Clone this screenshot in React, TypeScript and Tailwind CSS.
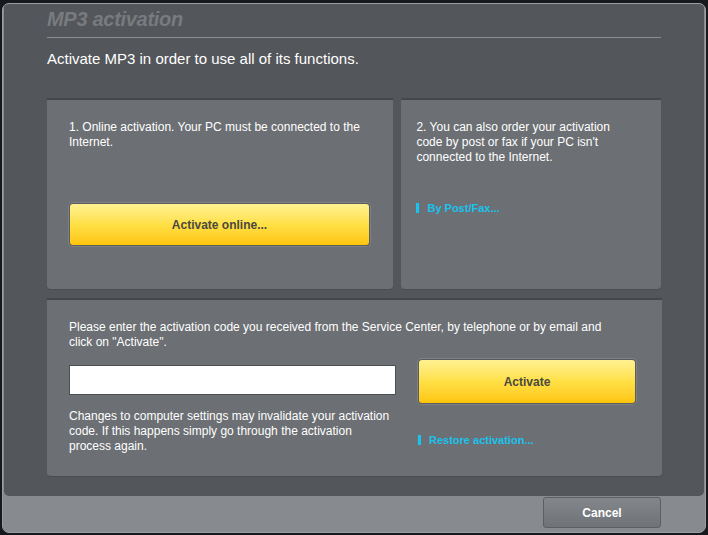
const font = { fontFamily: '"Liberation Sans", Arial, sans-serif' };

function YellowButton({ label, className }: { label: string; className: string }) {
  return (
    <div className={`rounded-[4px] p-px bg-[#5a5c5e] shadow-[0_0_0_1px_#7d8084] ${className}`}>
      <button className="w-full h-full rounded-[3px] bg-gradient-to-b from-[#fff18f] via-[#ffe044] to-[#ffc506] text-[12px] font-bold text-[#4b4940]">
        {label}
      </button>
    </div>
  );
}

function Link({ label }: { label: string }) {
  return (
    <div className="flex items-center gap-2 text-[11px] font-bold text-[#19c3ef]">
      <span className="w-[3px] h-[10px] bg-[#19c3ef]" />
      <span>{label}</span>
    </div>
  );
}

function Panel({ className, children }: { className: string; children: React.ReactNode }) {
  return (
    <div className={`bg-[#6c6f73] border-t-2 border-[#45484b] border-b border-b-[#4a4d50] rounded-b-[4px] ${className}`}>
      {children}
    </div>
  );
}

export default function App() {
  return (
    <div className="w-[708px] h-[535px] bg-[#17191c] pt-[3px] px-[2px]" style={font}>
      <div className="w-[704px] h-[530px] rounded-[7px] border border-[#9a9ea2] bg-[#878b8f] flex flex-col overflow-hidden">
        <div className="h-[492px] bg-[#53565a] rounded-b-[5px] mx-px pl-[43px] pr-[43px] pt-[3px] shrink-0">
          <h1 className="text-[20px] font-bold italic text-[#787b7f] leading-[25px] tracking-[-0.3px]">MP3 activation</h1>
          <div className="h-px bg-[#8a8d91] mt-[5px]" />
          <p className="text-white text-[15px] mt-[12px] leading-[18px]">
            Activate MP3 in order to use all of its functions.
          </p>
          <div className="flex gap-[8px] mt-[30px]">
            <Panel className="w-[347px] h-[192px] pl-[22px] pt-[20px]">
              <p className="text-[12px] leading-[15px] text-white w-[310px]">
                1. Online activation. Your PC must be connected to the Internet.
              </p>
              <YellowButton label="Activate online..." className="w-[301px] h-[43px] mt-[53px]" />
            </Panel>
            <Panel className="w-[260px] h-[192px] pl-[15px] pt-[20px]">
              <p className="text-[12px] leading-[15px] text-white w-[215px]">
                2. You can also order your activation code by post or fax if your PC isn't connected to the Internet.
              </p>
              <div className="mt-[35px]">
                <Link label="By Post/Fax..." />
              </div>
            </Panel>
          </div>
          <Panel className="w-[615px] h-[179px] mt-[8px] pl-[22px] pt-[20px]">
            <p className="text-[12px] leading-[15px] text-white w-[545px]">
              Please enter the activation code you received from the Service Center, by telephone or by email and click on "Activate".
            </p>
            <div className="flex mt-[9px]">
              <div className="w-[327px]">
                <input className="w-[327px] h-[30px] mt-[6px] bg-white border border-[#4c4f52] outline-none" />
                <p className="text-[12px] leading-[15px] text-white mt-[14px] w-[324px]">
                  Changes to computer settings may invalidate your activation code. If this happens simply go through the activation process again.
                </p>
              </div>
              <div className="ml-[22px]">
                <YellowButton label="Activate" className="w-[218px] h-[45px]" />
                <div className="mt-[28px]">
                  <Link label="Restore activation..." />
                </div>
              </div>
            </div>
          </Panel>
        </div>
        <div className="flex-1 flex justify-end items-start pr-[44px] pt-[1px]">
          <button className="w-[118px] h-[31px] rounded-[3px] border border-[#5b5e62] bg-gradient-to-b from-[#83878b] to-[#6f7377] text-white text-[12px] font-bold">
            Cancel
          </button>
        </div>
      </div>
    </div>
  );
}
